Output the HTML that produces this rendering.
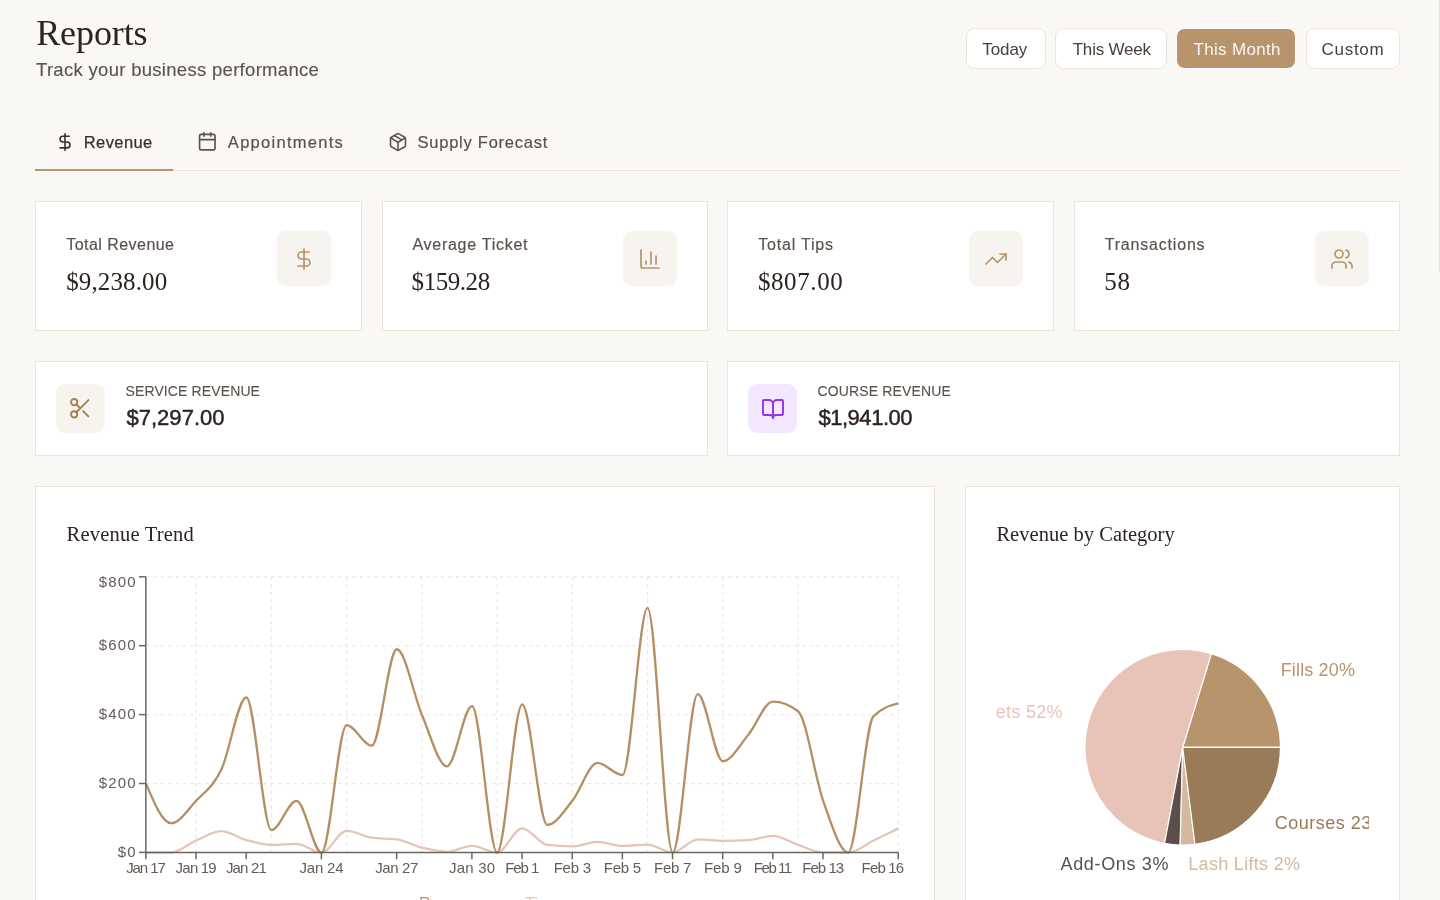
<!DOCTYPE html><html><head><meta charset="utf-8"><title>Reports</title><style>
html,body{margin:0;padding:0}
body{width:1440px;height:900px;overflow:hidden;position:relative;background:#faf8f5;font-family:"Liberation Sans",sans-serif}
.t{position:absolute;white-space:nowrap;line-height:1}
.tl{position:absolute;left:0;top:0;width:1440px;height:900px;will-change:transform}
.se{font-family:"Liberation Serif",serif}
.card{position:absolute;box-sizing:border-box;background:#fff;border:1px solid #ebe4dd}
.ib{position:absolute;background:#f7f3ee;border-radius:9px}
.ic{position:absolute;overflow:visible}
.chart{position:absolute;overflow:visible;will-change:transform}
.btn{position:absolute;top:27.6px;height:41.4px;box-sizing:border-box;background:#fff;border:1px solid #ebe4dc;border-radius:8.5px}
.btn.act{background:#b8946c;border-color:#fff}
.tabline{position:absolute;left:35px;top:170px;width:1365px;height:1px;background:#ebe4dd}
.tabact{position:absolute;left:35px;top:169px;width:138px;height:2.3px;background:#b8946c}
.pc{position:absolute;left:0;top:0;width:1440px;height:900px;clip-path:inset(0 71px 0 996px);will-change:transform}
.sb{position:absolute;left:1439px;top:0;width:1px;height:273px;background:#e6deda}
</style></head><body><div class="tabline"></div><div class="tabact"></div><div class="btn" style="left:966px;width:80px"></div><div class="btn" style="left:1055.2px;width:111.89999999999986px"></div><div class="btn act" style="left:1176.3px;width:120.0px"></div><div class="btn" style="left:1305.5px;width:94.5px"></div><div class="card" style="left:35px;top:201px;width:327px;height:130px"></div><div class="ib" style="left:277.0px;top:231px;width:54px;height:54.5px"></div><div class="card" style="left:382px;top:201px;width:326px;height:130px"></div><div class="ib" style="left:623.0px;top:231px;width:54px;height:54.5px"></div><div class="card" style="left:727px;top:201px;width:327px;height:130px"></div><div class="ib" style="left:969.0px;top:231px;width:54px;height:54.5px"></div><div class="card" style="left:1074px;top:201px;width:326px;height:130px"></div><div class="ib" style="left:1315.0px;top:231px;width:54px;height:54.5px"></div><div class="card" style="left:35px;top:361px;width:673px;height:95px"></div><div class="ib" style="left:56.1px;top:384.1px;width:49.2px;height:49.2px;background:#f7f3ee"></div><div class="card" style="left:727px;top:361px;width:673px;height:95px"></div><div class="ib" style="left:748.1px;top:384.1px;width:49.2px;height:49.2px;background:#f3e8ff"></div><div class="card" style="left:35px;top:486px;width:900px;height:500px"></div><div class="card" style="left:965px;top:486px;width:435px;height:500px"></div><svg class="chart" width="1440" height="900" viewBox="0 0 1440 900" style="left:0;top:0"><g stroke="#ebe5de" stroke-width="1.1" stroke-dasharray="3.4 3.97" fill="none"><line x1="146.0" y1="852.50" x2="898.40" y2="852.50"/><line x1="146.0" y1="783.60" x2="898.40" y2="783.60"/><line x1="146.0" y1="714.70" x2="898.40" y2="714.70"/><line x1="146.0" y1="645.80" x2="898.40" y2="645.80"/><line x1="146.0" y1="576.90" x2="898.40" y2="576.90"/><line x1="196.16" y1="576.90" x2="196.16" y2="852.5"/><line x1="271.40" y1="576.90" x2="271.40" y2="852.5"/><line x1="346.64" y1="576.90" x2="346.64" y2="852.5"/><line x1="421.88" y1="576.90" x2="421.88" y2="852.5"/><line x1="497.12" y1="576.90" x2="497.12" y2="852.5"/><line x1="572.36" y1="576.90" x2="572.36" y2="852.5"/><line x1="647.60" y1="576.90" x2="647.60" y2="852.5"/><line x1="722.84" y1="576.90" x2="722.84" y2="852.5"/><line x1="798.08" y1="576.90" x2="798.08" y2="852.5"/><line x1="898.40" y1="576.90" x2="898.40" y2="852.5"/></g><path d="M146.00,852.50C154.36,852.50,162.72,852.50,171.08,852.50C179.44,852.50,187.80,844.00,196.16,840.44C204.52,836.88,212.88,831.14,221.24,831.14C229.60,831.14,237.96,837.80,246.32,840.10C254.68,842.39,263.04,844.92,271.40,844.92C279.76,844.92,288.12,843.89,296.48,843.89C304.84,843.89,313.20,852.50,321.56,852.50C329.92,852.50,338.28,830.80,346.64,830.80C355.00,830.80,363.36,836.54,371.72,837.69C380.08,838.83,388.44,838.26,396.80,839.41C405.16,840.56,413.52,845.61,421.88,847.68C430.24,849.74,438.60,851.81,446.96,851.81C455.32,851.81,463.68,845.95,472.04,845.95C480.40,845.95,488.76,852.50,497.12,852.50C505.48,852.50,513.84,828.38,522.20,828.38C530.56,828.38,538.92,844.00,547.28,844.92C555.64,845.84,564.00,846.30,572.36,846.30C580.72,846.30,589.08,841.82,597.44,841.82C605.80,841.82,614.16,845.95,622.52,845.95C630.88,845.95,639.24,844.58,647.60,844.58C655.96,844.58,664.32,852.50,672.68,852.50C681.04,852.50,689.40,839.41,697.76,839.41C706.12,839.41,714.48,840.79,722.84,840.79C731.20,840.79,739.56,840.56,747.92,840.10C756.28,839.64,764.64,835.96,773.00,835.96C781.36,835.96,789.72,842.17,798.08,844.92C806.44,847.68,814.80,852.50,823.16,852.50C831.52,852.50,839.88,852.50,848.24,852.50C856.60,852.50,864.96,844.81,873.32,840.79C881.68,836.77,890.04,832.58,898.40,828.38" fill="none" stroke="#e8c4b8" stroke-width="2.3"/><path d="M146.00,783.60C154.36,803.41,162.72,823.22,171.08,823.22C179.44,823.22,187.80,809.72,196.16,800.83C204.52,791.93,212.88,787.04,221.24,769.82C229.60,752.59,237.96,697.48,246.32,697.48C254.68,697.48,263.04,830.11,271.40,830.11C279.76,830.11,288.12,800.83,296.48,800.83C304.84,800.83,313.20,852.50,321.56,852.50C329.92,852.50,338.28,725.03,346.64,725.03C355.00,725.03,363.36,745.70,371.72,745.70C380.08,745.70,388.44,649.25,396.80,649.25C405.16,649.25,413.52,695.18,421.88,714.70C430.24,734.22,438.60,766.38,446.96,766.38C455.32,766.38,463.68,706.09,472.04,706.09C480.40,706.09,488.76,852.50,497.12,852.50C505.48,852.50,513.84,704.37,522.20,704.37C530.56,704.37,538.92,824.94,547.28,824.94C555.64,824.94,564.00,811.16,572.36,800.83C580.72,790.49,589.08,762.93,597.44,762.93C605.80,762.93,614.16,774.99,622.52,774.99C630.88,774.99,639.24,607.90,647.60,607.90C655.96,607.90,664.32,852.50,672.68,852.50C681.04,852.50,689.40,694.03,697.76,694.03C706.12,694.03,714.48,761.21,722.84,761.21C731.20,761.21,739.56,745.30,747.92,735.37C756.28,725.44,764.64,701.61,773.00,701.61C781.36,701.61,789.72,704.82,798.08,711.25C806.44,717.69,814.80,777.28,823.16,800.83C831.52,824.37,839.88,852.50,848.24,852.50C856.60,852.50,864.96,725.15,873.32,716.42C881.68,707.70,890.04,705.51,898.40,703.33" fill="none" stroke="#b48f63" stroke-width="2.3"/><g stroke="#6a6664" stroke-width="1.5" fill="none" transform="translate(-0.15,-0.1)"><line x1="146.0" y1="576.90" x2="146.0" y2="852.5"/><line x1="146.0" y1="852.5" x2="898.40" y2="852.5"/><line x1="139.10" y1="852.50" x2="146.0" y2="852.50"/><line x1="139.10" y1="783.60" x2="146.0" y2="783.60"/><line x1="139.10" y1="714.70" x2="146.0" y2="714.70"/><line x1="139.10" y1="645.80" x2="146.0" y2="645.80"/><line x1="139.10" y1="576.90" x2="146.0" y2="576.90"/><line x1="146.00" y1="852.5" x2="146.00" y2="859.40"/><line x1="196.16" y1="852.5" x2="196.16" y2="859.40"/><line x1="246.32" y1="852.5" x2="246.32" y2="859.40"/><line x1="321.56" y1="852.5" x2="321.56" y2="859.40"/><line x1="396.80" y1="852.5" x2="396.80" y2="859.40"/><line x1="472.04" y1="852.5" x2="472.04" y2="859.40"/><line x1="522.20" y1="852.5" x2="522.20" y2="859.40"/><line x1="572.36" y1="852.5" x2="572.36" y2="859.40"/><line x1="622.52" y1="852.5" x2="622.52" y2="859.40"/><line x1="672.68" y1="852.5" x2="672.68" y2="859.40"/><line x1="722.84" y1="852.5" x2="722.84" y2="859.40"/><line x1="773.00" y1="852.5" x2="773.00" y2="859.40"/><line x1="823.16" y1="852.5" x2="823.16" y2="859.40"/><line x1="898.40" y1="852.5" x2="898.40" y2="859.40"/></g></svg><svg class="chart" width="1440" height="900" viewBox="0 0 1440 900" style="left:0;top:0"><g font-size="15" fill="#665b55" style="font-family:'Liberation Sans',sans-serif"><text x="146.00" y="873.4" text-anchor="middle" textLength="39.7" lengthAdjust="spacing">Jan 17</text><text x="196.16" y="873.4" text-anchor="middle" textLength="41.1" lengthAdjust="spacing">Jan 19</text><text x="246.32" y="873.4" text-anchor="middle" textLength="40.8" lengthAdjust="spacing">Jan 21</text><text x="321.56" y="873.4" text-anchor="middle" textLength="44.0" lengthAdjust="spacing">Jan 24</text><text x="396.80" y="873.4" text-anchor="middle" textLength="43.2" lengthAdjust="spacing">Jan 27</text><text x="472.04" y="873.4" text-anchor="middle" textLength="46.1" lengthAdjust="spacing">Jan 30</text><text x="522.20" y="873.4" text-anchor="middle" textLength="34.1" lengthAdjust="spacing">Feb 1</text><text x="572.36" y="873.4" text-anchor="middle" textLength="37.3" lengthAdjust="spacing">Feb 3</text><text x="622.52" y="873.4" text-anchor="middle" textLength="37.3" lengthAdjust="spacing">Feb 5</text><text x="672.68" y="873.4" text-anchor="middle" textLength="37.3" lengthAdjust="spacing">Feb 7</text><text x="722.84" y="873.4" text-anchor="middle" textLength="37.9" lengthAdjust="spacing">Feb 9</text><text x="773.00" y="873.4" text-anchor="middle" textLength="38.3" lengthAdjust="spacing">Feb 11</text><text x="823.16" y="873.4" text-anchor="middle" textLength="42.0" lengthAdjust="spacing">Feb 13</text><text x="882.90" y="873.4" text-anchor="middle" textLength="42.6" lengthAdjust="spacing">Feb 16</text></g></svg><svg class="chart" width="1440" height="900" viewBox="0 0 1440 900" style="left:0;top:0"><path d="M1182.7,747.3L1280.45,747.30A97.75,97.75 0 0 0 1211.28,653.82Z" fill="#b8946c" stroke="#fff" stroke-width="1.15" stroke-linejoin="round"/><path d="M1182.7,747.3L1211.28,653.82A97.75,97.75 0 1 0 1164.55,843.35Z" fill="#e8c4b8" stroke="#fff" stroke-width="1.15" stroke-linejoin="round"/><path d="M1182.7,747.3L1164.55,843.35A97.75,97.75 0 0 0 1180.14,845.02Z" fill="#5c4f4a" stroke="#fff" stroke-width="1.15" stroke-linejoin="round"/><path d="M1182.7,747.3L1180.14,845.02A97.75,97.75 0 0 0 1194.95,844.28Z" fill="#d4b8a0" stroke="#fff" stroke-width="1.15" stroke-linejoin="round"/><path d="M1182.7,747.3L1194.95,844.28A97.75,97.75 0 0 0 1280.45,747.30Z" fill="#9a7b58" stroke="#fff" stroke-width="1.15" stroke-linejoin="round"/></svg><svg class="ic" style="left:54.70px;top:131.85px" width="20" height="20" viewBox="0 0 24 24" fill="none" stroke="#3a2f2a" stroke-width="1.9" stroke-linecap="round" stroke-linejoin="round"><line x1="12" x2="12" y1="2" y2="22"/><path d="M17 5H9.5a3.5 3.5 0 0 0 0 7h5a3.5 3.5 0 0 1 0 7H6"/></svg><svg class="ic" style="left:197.10px;top:131.45px" width="20.6" height="20.6" viewBox="0 0 24 24" fill="none" stroke="#5c514b" stroke-width="1.9" stroke-linecap="round" stroke-linejoin="round"><path d="M8 2v4"/><path d="M16 2v4"/><rect width="18" height="18" x="3" y="4" rx="2"/><path d="M3 10h18"/></svg><svg class="ic" style="left:387.60px;top:131.70px" width="20" height="20" viewBox="0 0 24 24" fill="none" stroke="#5c514b" stroke-width="1.9" stroke-linecap="round" stroke-linejoin="round"><path d="M11 21.73a2 2 0 0 0 2 0l7-4A2 2 0 0 0 21 16V8a2 2 0 0 0-1-1.73l-7-4a2 2 0 0 0-2 0l-7 4A2 2 0 0 0 3 8v8a2 2 0 0 0 1 1.73z"/><path d="M12 22V12"/><path d="m3.3 7 7.703 4.734a2 2 0 0 0 1.994 0L20.7 7"/><path d="m7.5 4.27 9 5.15"/></svg><svg class="ic" style="left:292.00px;top:246.60px" width="24" height="24" viewBox="0 0 24 24" fill="none" stroke="#b8946c" stroke-width="1.7" stroke-linecap="round" stroke-linejoin="round"><line x1="12" x2="12" y1="2" y2="22"/><path d="M17 5H9.5a3.5 3.5 0 0 0 0 7h5a3.5 3.5 0 0 1 0 7H6"/></svg><svg class="ic" style="left:638.00px;top:246.60px" width="24" height="24" viewBox="0 0 24 24" fill="none" stroke="#b8946c" stroke-width="1.7" stroke-linecap="round" stroke-linejoin="round"><path d="M3 3v16a2 2 0 0 0 2 2h16"/><path d="M18 17V9"/><path d="M13 17V5"/><path d="M8 17v-3"/></svg><svg class="ic" style="left:984.00px;top:246.60px" width="24" height="24" viewBox="0 0 24 24" fill="none" stroke="#b8946c" stroke-width="1.7" stroke-linecap="round" stroke-linejoin="round"><polyline points="22 7 13.5 15.5 8.5 10.5 2 17"/><polyline points="16 7 22 7 22 13"/></svg><svg class="ic" style="left:1330.00px;top:246.60px" width="24" height="24" viewBox="0 0 24 24" fill="none" stroke="#b8946c" stroke-width="1.7" stroke-linecap="round" stroke-linejoin="round"><path d="M16 21v-2a4 4 0 0 0-4-4H6a4 4 0 0 0-4 4v2"/><circle cx="9" cy="7" r="4"/><path d="M22 21v-2a4 4 0 0 0-3-3.87"/><path d="M16 3.13a4 4 0 0 1 0 7.75"/></svg><svg class="ic" style="left:68.25px;top:396.25px" width="24.5" height="24.5" viewBox="0 0 24 24" fill="none" stroke="#a9834f" stroke-width="1.9" stroke-linecap="round" stroke-linejoin="round"><circle cx="6" cy="6" r="3"/><path d="M8.12 8.12 12 12"/><path d="M20 4 8.12 15.88"/><circle cx="6" cy="18" r="3"/><path d="M14.8 14.8 20 20"/></svg><svg class="ic" style="left:760.50px;top:396.90px" width="24" height="24" viewBox="0 0 24 24" fill="none" stroke="#9333ea" stroke-width="1.9" stroke-linecap="round" stroke-linejoin="round"><path d="M12 7v14"/><path d="M3 18a1 1 0 0 1-1-1V4a1 1 0 0 1 1-1h5a4 4 0 0 1 4 4 4 4 0 0 1 4-4h5a1 1 0 0 1 1 1v13a1 1 0 0 1-1 1h-6a3 3 0 0 0-3 3 3 3 0 0 0-3-3z"/></svg><div class="tl"><div class="t se" style="font-size:36px;top:15.35px;color:#2d2420;letter-spacing:-0.1px;left:36.20px;">Reports</div><div class="t" style="font-size:18.5px;top:61.04px;color:#5c514b;letter-spacing:0.3px;-webkit-text-stroke:0.12px #5c514b;left:36.00px;">Track your business performance</div><div class="t" style="font-size:17px;top:40.61px;color:#4a403a;letter-spacing:-0.05px;left:982.20px;">Today</div><div class="t" style="font-size:17px;top:40.61px;color:#4a403a;letter-spacing:-0.2px;left:1072.70px;">This Week</div><div class="t" style="font-size:17px;top:40.61px;color:#fbf7f1;letter-spacing:0.3px;left:1193.60px;">This Month</div><div class="t" style="font-size:17px;top:40.61px;color:#4a403a;letter-spacing:0.7px;left:1321.60px;">Custom</div><div class="t" style="font-size:16.5px;top:134.13px;color:#3a2f2a;letter-spacing:0.4px;-webkit-text-stroke:0.25px #3a2f2a;left:83.80px;">Revenue</div><div class="t" style="font-size:16.5px;top:134.13px;color:#5c514b;letter-spacing:1.28px;-webkit-text-stroke:0.2px #5c514b;left:227.85px;">Appointments</div><div class="t" style="font-size:16.5px;top:134.13px;color:#5c514b;letter-spacing:0.75px;-webkit-text-stroke:0.2px #5c514b;left:417.55px;">Supply Forecast</div><div class="t" style="font-size:16px;top:236.86px;color:#5c514b;letter-spacing:0.46px;-webkit-text-stroke:0.18px #5c514b;left:66.20px;">Total Revenue</div><div class="t se" style="font-size:25px;top:268.56px;color:#2d2420;letter-spacing:0.12px;left:66.20px;">$9,238.00</div><div class="t" style="font-size:16px;top:236.86px;color:#5c514b;letter-spacing:0.74px;-webkit-text-stroke:0.18px #5c514b;left:412.40px;">Average Ticket</div><div class="t se" style="font-size:25px;top:268.56px;color:#2d2420;letter-spacing:-0.45px;left:411.60px;">$159.28</div><div class="t" style="font-size:16px;top:236.86px;color:#5c514b;letter-spacing:0.81px;-webkit-text-stroke:0.18px #5c514b;left:758.20px;">Total Tips</div><div class="t se" style="font-size:25px;top:268.56px;color:#2d2420;letter-spacing:0.6px;left:757.90px;">$807.00</div><div class="t" style="font-size:16px;top:236.86px;color:#5c514b;letter-spacing:0.81px;-webkit-text-stroke:0.18px #5c514b;left:1104.70px;">Transactions</div><div class="t se" style="font-size:25px;top:268.56px;color:#2d2420;letter-spacing:0.9px;left:1104.20px;">58</div><div class="t" style="font-size:14px;top:384.45px;color:#5c514b;letter-spacing:0.12px;-webkit-text-stroke:0.12px #5c514b;left:125.50px;">SERVICE REVENUE</div><div class="t" style="font-size:22px;top:406.68px;color:#2d2420;letter-spacing:0.04000000000000001px;-webkit-text-stroke:0.45px #2d2420;left:126.40px;">$7,297.00</div><div class="t" style="font-size:14px;top:384.45px;color:#5c514b;letter-spacing:0.15px;-webkit-text-stroke:0.12px #5c514b;left:817.50px;">COURSE REVENUE</div><div class="t" style="font-size:22px;top:406.68px;color:#2d2420;letter-spacing:-0.45999999999999996px;-webkit-text-stroke:0.45px #2d2420;left:818.40px;">$1,941.00</div><div class="t se" style="font-size:20.5px;top:524.08px;color:#2d2420;letter-spacing:0.2px;left:66.60px;">Revenue Trend</div><div class="t se" style="font-size:20.5px;top:524.13px;color:#2d2420;letter-spacing:0.04px;left:996.40px;">Revenue by Category</div><div class="t" style="font-size:15px;top:843.90px;color:#665b55;letter-spacing:1.2px;right:1303.20px;">$0</div><div class="t" style="font-size:15px;top:775.00px;color:#665b55;letter-spacing:1.2px;right:1303.20px;">$200</div><div class="t" style="font-size:15px;top:706.10px;color:#665b55;letter-spacing:1.2px;right:1303.20px;">$400</div><div class="t" style="font-size:15px;top:637.20px;color:#665b55;letter-spacing:1.2px;right:1303.20px;">$600</div><div class="t" style="font-size:15px;top:574.30px;color:#665b55;letter-spacing:1.2px;right:1303.20px;">$800</div><div class="t" style="font-size:16px;top:895.76px;color:#b8946c;left:419.00px;">Revenue</div><div class="t" style="font-size:16px;top:895.76px;color:#e8c4b8;left:525.30px;">Tips</div></div><div class="pc"><div class="t" style="font-size:18px;top:660.56px;color:#b8946c;letter-spacing:0.15px;left:1280.70px;">Fills 20%</div><div class="t" style="font-size:18px;top:813.96px;color:#9a7b58;letter-spacing:0.5px;left:1274.80px;">Courses 23%</div><div class="t" style="font-size:18px;top:703.26px;color:#e8c4b8;letter-spacing:0.3px;right:377.10px;">Full Sets 52%</div><div class="t" style="font-size:18px;top:854.96px;color:#5c4f4a;letter-spacing:0.66px;left:1060.50px;">Add-Ons 3%</div><div class="t" style="font-size:18px;top:854.96px;color:#d4b8a0;letter-spacing:0.3px;left:1188.30px;">Lash Lifts 2%</div></div><div class="sb"></div></body></html>
